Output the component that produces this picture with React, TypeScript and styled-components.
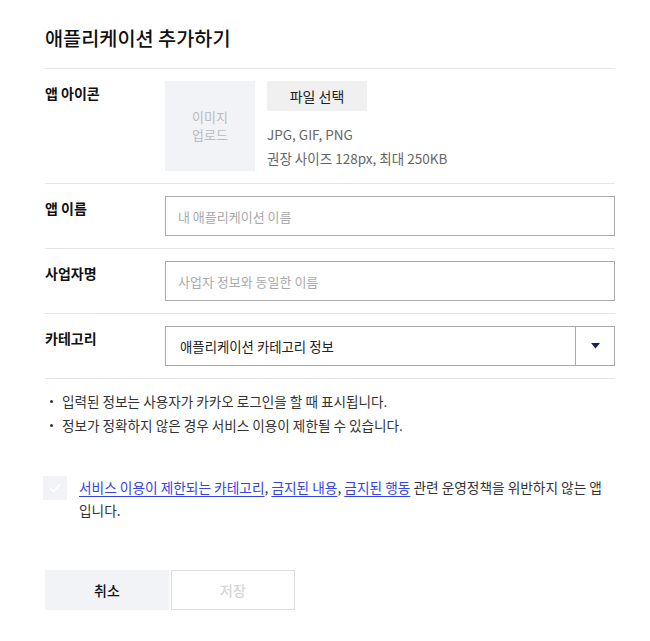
import React from "react";
import styled, { createGlobalStyle } from "styled-components";

const Global = createGlobalStyle`
  html, body { margin: 0; padding: 0; background: #fff; }
  body { font-family: "Noto Sans CJK KR", "Noto Sans", sans-serif; color: #222; }
  * { box-sizing: border-box; }
`;

const Page = styled.div`
  width: 650px;
  padding: 20px 35px 0 45px;
`;

const Title = styled.h1`
  margin: 0;
  font-size: 19.7px;
  font-weight: 500;
  line-height: 36px;
  padding-bottom: 12px;
  color: #111;
  border-bottom: 1px solid #e5e5e5;
`;

const Row = styled.div`
  display: grid;
  grid-template-columns: 120px 1fr;
  padding: 12px 0;
  border-bottom: 1px solid #e5e5e5;
`;

const Label = styled.div`
  font-size: 14px;
  font-weight: 700;
  color: #111;
  line-height: 24px;
`;

const IconArea = styled.div`
  display: flex;
  gap: 12px;
`;

const ImageBox = styled.div`
  width: 90px;
  height: 90px;
  background: #f2f3f7;
  color: #bbb;
  font-size: 13px;
  line-height: 18px;
  display: flex;
  align-items: center;
  justify-content: center;
  text-align: center;
`;

const FileCol = styled.div`
  display: flex;
  flex-direction: column;
`;

const FileButton = styled.button`
  width: 100px;
  height: 30px;
  border: none;
  background: #f0f0f0;
  font-family: inherit;
  font-size: 14px;
  color: #222;
  padding: 0;
  margin-bottom: 11px;
`;

const Hint = styled.div`
  font-size: 13.5px;
  color: #666;
  line-height: 24px;
`;

const TextInput = styled.input`
  width: 450px;
  height: 40px;
  border: 1px solid #aaa;
  padding: 0 12px;
  font-family: inherit;
  font-size: 13px;
  color: #222;
  outline: none;
  &::placeholder { color: #aaa; }
`;

const Select = styled.div`
  width: 450px;
  height: 40px;
  border: 1px solid #aaa;
  display: flex;
`;

const SelectValue = styled.div`
  flex: 1;
  padding: 0 14px;
  font-size: 13.4px;
  line-height: 38px;
  color: #222;
`;

const SelectArrow = styled.div`
  width: 39px;
  border-left: 1px solid #aaa;
  display: flex;
  align-items: center;
  justify-content: center;
`;

const Notes = styled.ul`
  margin: 0;
  padding: 10px 0 0 0;
  list-style: none;
`;

const Note = styled.li`
  position: relative;
  padding-left: 17px;
  font-size: 13.6px;
  line-height: 24px;
  color: #333;
  &::before {
    content: "";
    position: absolute;
    left: 5px;
    top: 11px;
    width: 3px;
    height: 3px;
    border-radius: 50%;
    background: #333;
  }
`;

const Agree = styled.div`
  display: flex;
  gap: 12px;
  margin-top: 39px;
  margin-left: -2px;
`;

const CheckBox = styled.div`
  flex: none;
  width: 24px;
  height: 24px;
  margin-top: 0px;
  background: #f2f3f7;
  display: flex;
  align-items: center;
  justify-content: center;
`;

const AgreeText = styled.div`
  font-size: 13.7px;
  line-height: 23px;
  color: #333;
  width: 534px;
  word-break: break-all;
`;

const Link = styled.a`
  color: #3443e6;
  text-decoration: underline;
  text-underline-offset: 3px;
`;

const Buttons = styled.div`
  display: flex;
  gap: 2px;
  margin-top: 48px;
`;

const Btn = styled.button<{ $primary?: boolean }>`
  width: 124px;
  height: 40px;
  font-family: inherit;
  font-size: 14px;
  font-weight: 500;
  padding: 0;
  border: 1px solid ${(p) => (p.$primary ? "#f2f3f7" : "#dcdcdc")};
  background: ${(p) => (p.$primary ? "#f2f3f7" : "#fff")};
  color: ${(p) => (p.$primary ? "#111" : "#d5d5d5")};
`;

export default function App() {
  return (
    <>
      <Global />
      <Page>
        <Title>애플리케이션 추가하기</Title>
        <Row>
          <Label>앱 아이콘</Label>
          <IconArea>
            <ImageBox>
              이미지
              <br />
              업로드
            </ImageBox>
            <FileCol>
              <FileButton>파일 선택</FileButton>
              <Hint>JPG, GIF, PNG</Hint>
              <Hint>권장 사이즈 128px, 최대 250KB</Hint>
            </FileCol>
          </IconArea>
        </Row>
        <Row>
          <Label>앱 이름</Label>
          <TextInput placeholder="내 애플리케이션 이름" />
        </Row>
        <Row>
          <Label>사업자명</Label>
          <TextInput placeholder="사업자 정보와 동일한 이름" />
        </Row>
        <Row>
          <Label>카테고리</Label>
          <Select>
            <SelectValue>애플리케이션 카테고리 정보</SelectValue>
            <SelectArrow>
              <svg width="9" height="6" viewBox="0 0 9 6">
                <path d="M0 0 H9 L4.5 5.5 Z" fill="#1b1f5e" />
              </svg>
            </SelectArrow>
          </Select>
        </Row>
        <Notes>
          <Note>입력된 정보는 사용자가 카카오 로그인을 할 때 표시됩니다.</Note>
          <Note>정보가 정확하지 않은 경우 서비스 이용이 제한될 수 있습니다.</Note>
        </Notes>
        <Agree>
          <CheckBox>
            <svg width="12" height="10" viewBox="0 0 12 10">
              <path d="M1 5 L4.5 8.5 L11 1.5" fill="none" stroke="#fff" strokeWidth="1.8" />
            </svg>
          </CheckBox>
          <AgreeText>
            <Link>서비스 이용이 제한되는 카테고리</Link>, <Link>금지된 내용</Link>,{" "}
            <Link>금지된 행동</Link> 관련 운영정책을 위반하지 않는 앱입니다.
          </AgreeText>
        </Agree>
        <Buttons>
          <Btn $primary>취소</Btn>
          <Btn>저장</Btn>
        </Buttons>
      </Page>
    </>
  );
}
